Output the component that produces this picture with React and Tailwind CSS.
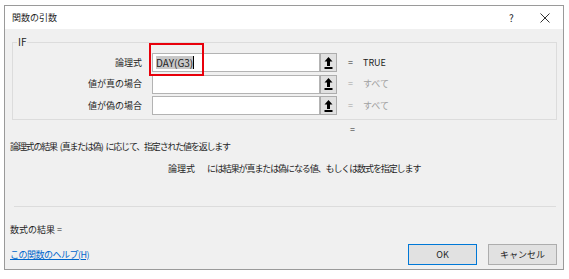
import React from "react";

const font = { fontFamily: '"Noto Sans CJK JP", "Noto Sans", sans-serif' };

function RefButton() {
  return (
    <div className="w-[17px] h-[19px] border border-[#adadad] bg-[#e1e1e1] flex items-center justify-center">
      <svg width="9" height="12" viewBox="0 0 9 12">
        <path d="M4.5 0 L8.5 4.5 L6 4.5 L6 9 L3 9 L3 4.5 L0.5 4.5 Z" fill="#000" />
        <rect x="0.5" y="10" width="8" height="2" fill="#000" />
      </svg>
    </div>
  );
}

function ArgRow({ label, value, dim, children }) {
  return (
    <div className="flex items-center h-[19px]">
      <div className="w-[129px] text-right text-[#1e1e1e]">{label}</div>
      <div className="ml-[10px] w-[168px] h-[19px] bg-white border border-[#b3b3b3] flex items-center pl-[3px]">
        {children}
      </div>
      <RefButton />
      <div className={"ml-[11px] w-[6px] " + (dim ? "text-[#a0a0a0]" : "text-[#1e1e1e]")}>=</div>
      <div className={"ml-[9px] " + (dim ? "text-[#a0a0a0]" : "text-[#1e1e1e]")}>{value}</div>
    </div>
  );
}

export default function App() {
  return (
    <div className="w-[569px] h-[279px] bg-white pl-[4px] pt-[5px] text-[9px] leading-[12px]" style={font}>
      <div className="w-[560px] h-[265px] border border-[#9a9a9a] flex flex-col">
        {/* title bar */}
        <div className="h-[23px] bg-white flex items-center pl-[7px] text-[#1e1e1e]">
          <span className="flex-1">関数の引数</span>
          <span className="w-[10px] text-[10px]">?</span>
          <svg className="ml-[21px] mr-[13px]" width="10" height="10" viewBox="0 0 10 10">
            <path d="M0.5 0.5 L9.5 9.5 M9.5 0.5 L0.5 9.5" stroke="#333" strokeWidth="1" />
          </svg>
        </div>

        {/* body */}
        <div className="flex-1 bg-[#f0f0f0] flex flex-col px-[5px] relative">
          <fieldset className="mt-[7px] ml-[2px] mr-[1px] border border-[#dcdcdc] px-0 pt-[5px] pb-[4px]">
            <legend className="ml-[4px] px-[1px] text-[#1e1e1e] text-[10px]">IF</legend>
            <div className="flex flex-col gap-[2.5px]">
              <ArgRow label="論理式" value="TRUE">
                <span className="bg-[#c8c8c8] text-[#1e1e1e] text-[10px] leading-[13px]">DAY(G3)</span>
                <span className="w-[1px] h-[13px] bg-black" />
              </ArgRow>
              <ArgRow label="値が真の場合" value="すべて" dim />
              <ArgRow label="値が偽の場合" value="すべて" dim />
            </div>
          </fieldset>

          {/* red highlight */}
          <div className="absolute left-[144px] top-[14px] w-[55px] h-[33px] border-2 border-[#e8000b]" />

          <div className="mt-[4px] pl-[340px] text-[#1e1e1e]">=</div>
          <div className="mt-[5px] text-[#1e1e1e] tracking-[-1.2px]">
            論理式の結果<span className="ml-[3px]">(真または偽)</span><span className="ml-[3px]">に応じて、指定された値を返します</span>
          </div>
          <div className="mt-[10px] flex text-[#1e1e1e]">
            <span className="ml-[158px] w-[39px]">論理式</span>
            <span className="tracking-[-1.1px]">には結果が真または偽になる値、もしくは数式を指定します</span>
          </div>

          <div className="mt-[31px] ml-[4px] mr-[2px] h-[1px] bg-[#dcdcdc]" />
          <div className="mt-[17px] text-[#1e1e1e]">数式の結果 =</div>

          <div className="mt-[8px] flex items-center">
            <span className="flex-1 text-[#0066cc] underline tracking-[-0.5px]">この関数のヘルプ(H)</span>
            <div className="w-[69px] h-[21px] bg-[#e1e1e1] border border-[#0078d7] flex items-center justify-center text-[#1e1e1e]">OK</div>
            <div className="ml-[11px] mr-[1px] w-[69px] h-[21px] bg-[#e1e1e1] border border-[#adadad] flex items-center justify-center text-[#1e1e1e]">キャンセル</div>
          </div>
        </div>
      </div>
    </div>
  );
}
